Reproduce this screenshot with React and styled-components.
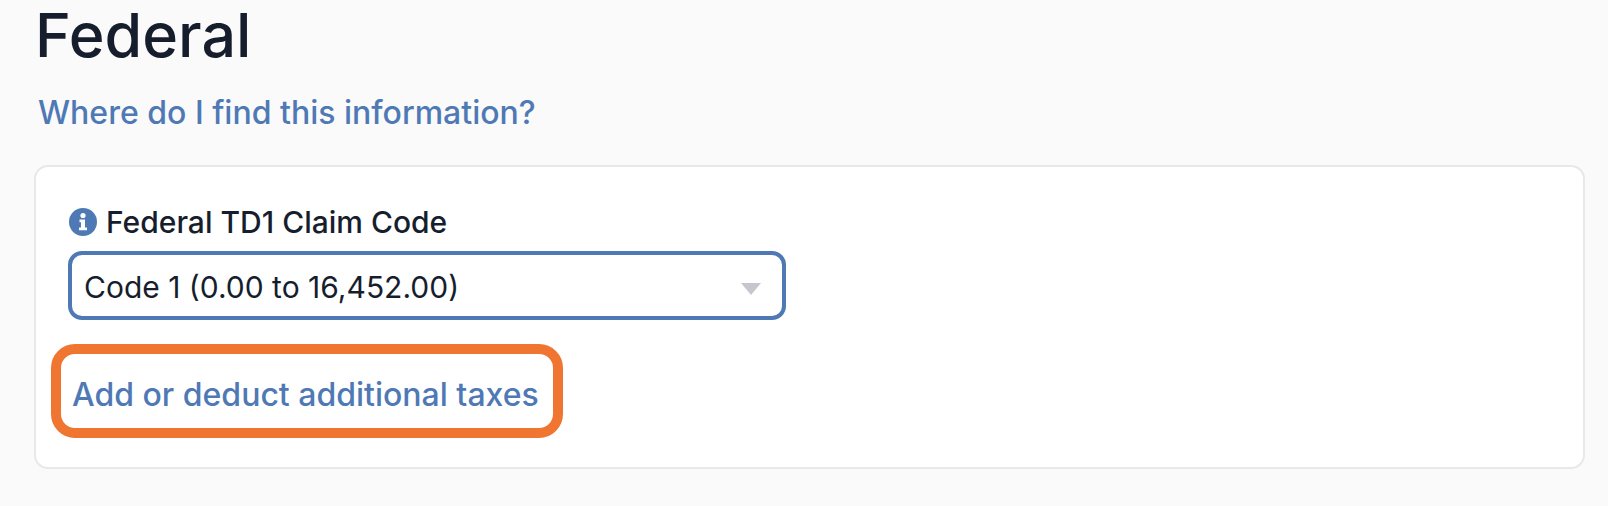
import React from 'react';
import styled, { createGlobalStyle } from 'styled-components';

const GlobalStyle = createGlobalStyle`
  html, body {
    margin: 0;
    background: #fafafa;
  }
  body {
    font-family: Inter, "Noto Sans", sans-serif;
    color: #161e2e;
  }
`;

const Page = styled.main`
  width: 1608px;
  height: 506px;
  box-sizing: border-box;
  padding: 0 23px 0 34px;
  overflow: hidden;
`;

const Title = styled.h1`
  margin: 0;
  padding-left: 1px;
  font-size: 61px;
  line-height: 70px;
  font-weight: 500;
`;

const HelpLink = styled.a`
  display: block;
  margin-top: 24px;
  padding-left: 4px;
  font-size: 32px;
  line-height: 38px;
  font-weight: 450;
  color: #4f79b5;
`;

const Card = styled.section`
  margin-top: 33px;
  height: 304px;
  box-sizing: border-box;
  padding: 37px 32px 0;
  background: #fff;
  border: 2px solid #e8e8e8;
  border-radius: 14px;
`;

const Label = styled.div`
  display: flex;
  align-items: center;
  gap: 9px;
  padding-left: 1px;
  font-size: 30px;
  line-height: 36px;
  font-weight: 450;
`;

const Select = styled.div`
  display: flex;
  align-items: center;
  justify-content: space-between;
  box-sizing: border-box;
  width: 718px;
  height: 69px;
  margin-top: 11px;
  padding: 2px 21px 0 12px;
  border: 4px solid #4f79b5;
  border-radius: 14px;
  font-size: 30px;
`;

const Caret = styled.span`
  width: 0;
  height: 0;
  margin-top: 4px;
  border-left: 10px solid transparent;
  border-right: 10px solid transparent;
  border-top: 12px solid #c6c7cc;
`;

const Highlight = styled.a`
  display: flex;
  align-items: center;
  box-sizing: border-box;
  width: 512px;
  height: 94px;
  margin: 24px 0 0 -17px;
  padding: 6px 0 0 11px;
  border: 10px solid #ef7530;
  border-radius: 24px;
  font-size: 32px;
  font-weight: 450;
  color: #4f79b5;
`;

const InfoIcon = () => (
  <svg width="28" height="28" viewBox="0 0 28 28">
    <circle cx="14" cy="14" r="14" fill="#4f79b5" />
    <circle cx="14" cy="7.5" r="2.6" fill="#fff" />
    <path d="M10.5 11.5h5.5v8h2v2.8h-8v-2.8h2v-5.2h-1.5z" fill="#fff" />
  </svg>
);

export default function App() {
  return (
    <Page>
      <GlobalStyle />
      <Title>Federal</Title>
      <HelpLink>Where do I find this information?</HelpLink>
      <Card>
        <Label>
          <InfoIcon />
          Federal TD1 Claim Code
        </Label>
        <Select>
          Code 1 (0.00 to 16,452.00)
          <Caret />
        </Select>
        <Highlight>Add or deduct additional taxes</Highlight>
      </Card>
    </Page>
  );
}
